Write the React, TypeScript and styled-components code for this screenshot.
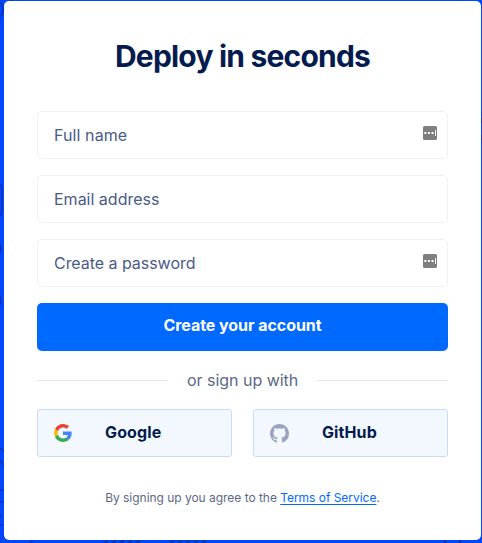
import React from "react";
import styled, { createGlobalStyle } from "styled-components";

const Global = createGlobalStyle`
  * { box-sizing: border-box; }
  body { margin: 0; background: #0047ff; font-family: Inter, "Liberation Sans", sans-serif; -webkit-font-smoothing: antialiased; }
`;

const Page = styled.main`
  position: relative;
  width: 482px;
  height: 543px;
  padding: 1px 1px 3px 4px;
  background: #0047ff;
  overflow: hidden;
`;

const Backdrop = styled.svg`
  position: absolute;
  inset: 0;
`;

const Card = styled.section`
  position: relative;
  height: 539px;
  padding: 0 33px;
  border-radius: 5px;
  background: #fff;
  display: flex;
  flex-direction: column;
`;

const Title = styled.h1`
  margin: 37px 0 0;
  height: 73px;
  line-height: 36px;
  font-size: 30px;
  font-weight: 650;
  letter-spacing: -0.8px;
  text-align: center;
  white-space: nowrap;
  color: #031b4e;
`;

const Field = styled.label`
  display: flex;
  align-items: center;
  justify-content: space-between;
  height: 48px;
  margin-bottom: 16px;
  padding: 0 10px 0 16px;
  border: 1px solid #f1f1f3;
  border-radius: 5px;
`;

const Placeholder = styled.span<{ $spacing: number }>`
  font-size: 16px;
  line-height: 20px;
  letter-spacing: ${(p) => p.$spacing}px;
  white-space: nowrap;
  color: #4a5b87;
`;

const KeyIcon = styled.svg`
  margin-bottom: 5px;
`;

const Submit = styled.button`
  height: 48px;
  padding: 0 0 4px;
  border: 0;
  border-radius: 5px;
  background: #0069ff;
  color: #fff;
  font: 700 16px/20px Inter, sans-serif;
  letter-spacing: -0.05px;
`;

const Divider = styled.div`
  display: flex;
  align-items: center;
  gap: 19px;
  height: 58px;
  &::before, &::after {
    content: "";
    flex: 1;
    height: 1px;
    background: #dfe5f0;
  }
`;

const DividerText = styled.span`
  width: 111px;
  font-size: 16px;
  letter-spacing: -0.03px;
  white-space: nowrap;
  color: #5b6987;
`;

const Providers = styled.div`
  display: grid;
  grid-template-columns: 1fr 1fr;
  gap: 21px;
`;

const Provider = styled.button`
  display: flex;
  align-items: center;
  height: 48px;
  padding: 0 0 0 16px;
  border: 1px solid #c8dbfc;
  border-radius: 3px;
  background: #f3f8ff;
`;

const ProviderName = styled.span<{ $left: number; $spacing: number }>`
  margin: 0 0 2px ${(p) => p.$left}px;
  font: 700 16px/20px Inter, sans-serif;
  letter-spacing: ${(p) => p.$spacing}px;
  color: #031b4e;
`;

const Terms = styled.p`
  margin: 32px 0 0;
  font-size: 12px;
  line-height: 18px;
  letter-spacing: -0.03px;
  text-align: center;
  white-space: nowrap;
  color: #5b6987;
  a { color: #0069ff; text-decoration: underline; text-underline-offset: 2px; }
`;

const PasswordKey = () => (
  <KeyIcon width="14" height="14" viewBox="0 0 14 14">
    <rect width="14" height="14" rx="1.5" fill="#7f7f7f" />
    <path d="M1.3 6h2v2h-2zM4.9 6h2v2h-2zM8.5 6h2v2h-2zM12 4h1v6h-1z" fill="#fff" />
  </KeyIcon>
);

const GoogleIcon = () => (
  <svg width="18" height="18" viewBox="0 0 48 48">
    <path fill="#ea4335" d="M24 9.5c3.54 0 6.71 1.22 9.21 3.6l6.85-6.85C35.9 2.38 30.47 0 24 0 14.62 0 6.51 5.38 2.56 13.22l7.98 6.19C12.43 13.72 17.74 9.5 24 9.5z" />
    <path fill="#4285f4" d="M46.98 24.55c0-1.57-.15-3.09-.38-4.55H24v9.02h12.94c-.58 2.96-2.26 5.48-4.78 7.18l7.73 6c4.51-4.18 7.09-10.36 7.09-17.65z" />
    <path fill="#fbbc05" d="M10.53 28.59c-.48-1.45-.76-2.99-.76-4.59s.27-3.14.76-4.59l-7.98-6.19C.92 16.46 0 20.12 0 24s.92 7.54 2.56 10.78l7.97-6.19z" />
    <path fill="#34a853" d="M24 48c6.48 0 11.93-2.13 15.89-5.81l-7.73-6c-2.15 1.45-4.92 2.3-8.16 2.3-6.26 0-11.57-4.22-13.47-9.91l-7.98 6.19C6.51 42.62 14.62 48 24 48z" />
  </svg>
);

const GitHubIcon = () => (
  <svg width="19" height="19" viewBox="0 0 16 16">
    <path fill="#9aa5bd" d="M8 0C3.58 0 0 3.58 0 8c0 3.54 2.29 6.53 5.47 7.59.4.07.55-.17.55-.38 0-.19-.01-.82-.01-1.49-2.01.37-2.53-.49-2.69-.94-.09-.23-.48-.94-.82-1.13-.28-.15-.68-.52-.01-.53.63-.01 1.08.58 1.23.82.72 1.21 1.87.87 2.33.66.07-.52.28-.87.51-1.07-1.78-.2-3.64-.89-3.64-3.95 0-.87.31-1.59.82-2.15-.08-.2-.36-1.02.08-2.12 0 0 .67-.21 2.2.82.64-.18 1.32-.27 2-.27s1.36.09 2 .27c1.53-1.04 2.2-.82 2.2-.82.44 1.1.16 1.92.08 2.12.51.56.82 1.27.82 2.15 0 3.07-1.87 3.75-3.65 3.95.29.25.54.73.54 1.48 0 1.07-.01 1.93-.01 2.2 0 .21.15.46.55.38A8.01 8.01 0 0 0 16 8c0-4.42-3.58-8-8-8z" />
  </svg>
);

export default function App() {
  return (
    <Page>
      <Global />
      <Backdrop width="482" height="543" fill="none" stroke="#0930b5" strokeWidth="1.5">
        <path d="M0 2q3 3 3 8t-3 7M10 0h3M0 184q2 2 2 5v20q0 5-2 7M0 245q2 4 0 7M0 297q2 4 0 8M0 448l4 4M0 460l4 6M0 490h4M0 502h4M0 515l2 2M0 525h3M4 536l2 3M30 543l3-3" />
        <path d="M104 543l4-3M112 543l4-3M120 543l4-3M128 543l4-3M136 543l4-3M170 543l4-3M178 543l4-3M186 543l4-3M194 543l4-3M202 543l4-3M445 540v3M460 540v3M481 118v5M481 135v5" strokeWidth="2.5" />
      </Backdrop>
      <Card>
        <Title>Deploy in seconds</Title>
        <Field><Placeholder $spacing={0.1}>Full name</Placeholder><PasswordKey /></Field>
        <Field><Placeholder $spacing={0}>Email address</Placeholder></Field>
        <Field><Placeholder $spacing={-0.04}>Create a password</Placeholder><PasswordKey /></Field>
        <Submit>Create your account</Submit>
        <Divider><DividerText>or sign up with</DividerText></Divider>
        <Providers>
          <Provider><GoogleIcon /><ProviderName $left={33} $spacing={0.15}>Google</ProviderName></Provider>
          <Provider><GitHubIcon /><ProviderName $left={33} $spacing={0.1}>GitHub</ProviderName></Provider>
        </Providers>
        <Terms>By signing up you agree to the <a>Terms of Service</a>.</Terms>
      </Card>
    </Page>
  );
}
